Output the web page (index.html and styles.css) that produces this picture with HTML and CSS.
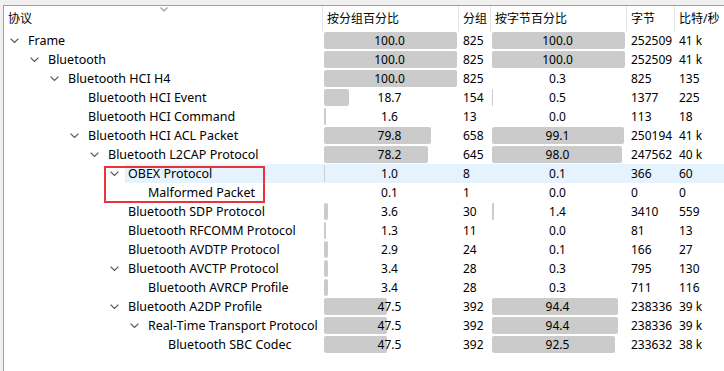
FILE: index.html
```html
<!DOCTYPE html>
<html lang="zh">
<head>
<meta charset="utf-8">
<title>协议分级统计</title>
<link rel="stylesheet" href="styles.css">
</head>
<body>
<div class="tree">
  <div class="row head">
    <div class="hc c1">协议<span class="sort"><svg width="8" height="5" viewBox="0 0 8 5"><polyline points="0.5,0.5 4,4 7.5,0.5" fill="none" stroke="#9a9a9a" stroke-width="1.2"/></svg></span></div>
    <div class="hc">按分组百分比</div>
    <div class="hc">分组</div>
    <div class="hc">按字节百分比</div>
    <div class="hc">字节</div>
    <div class="hc last">比特/秒</div>
  </div>
  <div id="rows"></div>
</div>
<div class="mark"></div>
<script>
var data = [
 [0,1,"Frame","100.0",133,"825","100.0",133,"252509","41 k"],
 [1,1,"Bluetooth","100.0",133,"825","100.0",133,"252509","41 k"],
 [2,1,"Bluetooth HCI H4","100.0",133,"825","0.3",0,"825","135"],
 [3,0,"Bluetooth HCI Event","18.7",25,"154","0.5",1,"1377","225"],
 [3,0,"Bluetooth HCI Command","1.6",2,"13","0.0",0,"113","18"],
 [3,1,"Bluetooth HCI ACL Packet","79.8",107,"658","99.1",132,"250194","41 k"],
 [4,1,"Bluetooth L2CAP Protocol","78.2",104,"645","98.0",130,"247562","40 k"],
 [5,1,"OBEX Protocol","1.0",1,"8","0.1",0,"366","60",1],
 [6,0,"Malformed Packet","0.1",0,"1","0.0",0,"0","0"],
 [5,0,"Bluetooth SDP Protocol","3.6",4,"30","1.4",2,"3410","559"],
 [5,0,"Bluetooth RFCOMM Protocol","1.3",2,"11","0.0",0,"81","13"],
 [5,0,"Bluetooth AVDTP Protocol","2.9",4,"24","0.1",0,"166","27"],
 [5,1,"Bluetooth AVCTP Protocol","3.4",4,"28","0.3",0,"795","130"],
 [6,0,"Bluetooth AVRCP Profile","3.4",4,"28","0.3",0,"711","116"],
 [5,1,"Bluetooth A2DP Profile","47.5",63,"392","94.4",126,"238336","39 k"],
 [6,1,"Real-Time Transport Protocol","47.5",63,"392","94.4",126,"238336","39 k"],
 [7,0,"Bluetooth SBC Codec","47.5",63,"392","92.5",123,"233632","38 k"]
];
var chev = '<svg width="9" height="5" viewBox="0 0 9 5"><polyline points="0.6,0.6 4.5,4.4 8.4,0.6" fill="none" stroke="#5a5a5a" stroke-width="1.3"/></svg>';
var html = "";
data.forEach(function(d){
  var sel = d[10] ? " sel" : "";
  html += '<div class="row body' + sel + '">' +
    '<div class="c1 l' + d[0] + '"><span class="tw">' + (d[1] ? chev : "") + '</span><span class="lab">' + d[2] + '</span></div>' +
    '<div class="pc">' + (d[4] ? '<span class="bar" style="width:' + d[4] + 'px"></span>' : '') + '<span class="pt">' + d[3] + '</span></div>' +
    '<div class="nc">' + d[5] + '</div>' +
    '<div class="pc">' + (d[7] ? '<span class="bar" style="width:' + d[7] + 'px"></span>' : '') + '<span class="pt">' + d[6] + '</span></div>' +
    '<div class="nc">' + d[8] + '</div>' +
    '<div class="nc">' + d[9] + '</div>' +
    '</div>';
});
document.getElementById("rows").innerHTML = html;
</script>
</body>
</html>
```
FILE: styles.css
```css
html, body {
  margin: 0;
  padding: 0;
}
body {
  background: #f0f0f0;
  width: 724px;
  height: 371px;
  overflow: hidden;
  font-family: "Noto Sans", "Noto Sans CJK SC", sans-serif;
  font-size: 12px;
  color: #000;
  position: relative;
}
.tree {
  margin: 5px 0 0 3px;
  border-top: 1px solid #a0a0a0;
  border-left: 1px solid #a0a0a0;
  background: #fff;
  height: 365px;
}
.row {
  display: grid;
  grid-template-columns: 319px 136px 32px 136px 48px 49px;
}
.head {
  height: 25px;
}
.hc {
  position: relative;
  border-right: 1px solid #e5e5e5;
  line-height: 25px;
  padding-left: 4px;
  white-space: nowrap;
}
.hc.last { border-right: none; }
.sort {
  position: absolute;
  left: 156px;
  top: 1px;
  line-height: 0;
}
.body {
  height: 19px;
  line-height: 19px;
  white-space: nowrap;
}
.c1 {
  display: flex;
  align-items: center;
}
.body .c1 { padding-left: 6px; }
.body .c1.l1 { padding-left: 26px; }
.body .c1.l2 { padding-left: 46px; }
.body .c1.l3 { padding-left: 66px; }
.body .c1.l4 { padding-left: 86px; }
.body .c1.l5 { padding-left: 106px; }
.body .c1.l6 { padding-left: 126px; }
.body .c1.l7 { padding-left: 146px; }
.tw {
  width: 15px;
  flex: none;
  display: flex;
  align-items: center;
  height: 19px;
}
.lab {
  flex: 1;
  padding-left: 3px;
  height: 19px;
  font-size: 12.5px;
}
.sel .lab, .sel .pc, .sel .nc { background: #e5f3ff; }
.pc {
  position: relative;
  text-align: center;
}
.pt {
  position: relative;
  padding-right: 3px;
}
.bar {
  position: absolute;
  left: 1px;
  top: 1px;
  height: 17px;
  background: #cbcbcb;
  border-radius: 2px;
}
.nc {
  padding-left: 4px;
}
.mark {
  position: absolute;
  left: 104px;
  top: 166px;
  width: 157px;
  height: 33px;
  border: 2px solid #ea3338;
}
```
